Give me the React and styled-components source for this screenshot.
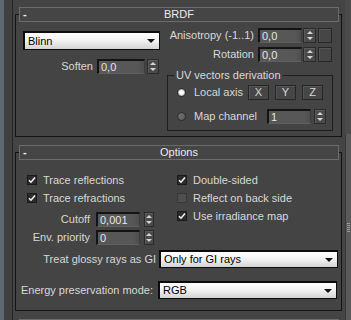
import React from "react";
import styled, { createGlobalStyle } from "styled-components";

const Global = createGlobalStyle`
  html, body { margin: 0; padding: 0; background: #444444; }
  body { font-family: "Liberation Sans", Arial, sans-serif; font-size: 11px; color: #d8d8d8; }
  * { box-sizing: border-box; }
`;

const Screen = styled.div`
  display: flex;
  width: 351px;
  height: 320px;
  overflow: hidden;
  background: #444444;
`;

const EdgeStrip = styled.div`
  flex: none;
  width: 4px;
  background: #5d6873;
`;

const Gutter = styled.div`
  flex: none;
  width: 9px;
  background: #404040;
  border-right: 1px solid #252525;
`;

const Main = styled.div`
  flex: 1;
  min-width: 0;
  display: flex;
  flex-direction: column;
  gap: 8px;
  padding: 7px 3px 0 2px;
`;

const ScrollTrack = styled.div`
  flex: none;
  width: 6px;
  display: flex;
  flex-direction: column;
  padding-top: 134px;
  background: #4b4b4b;
`;

const ScrollThumb = styled.div`
  flex: 1;
  display: flex;
  align-items: center;
  justify-content: center;
  background: #5a5a5a;
  border-left: 1px solid #383838;
`;

const Grip = styled.div`
  width: 3px;
  height: 9px;
  background: repeating-linear-gradient(#9a9a9a 0 1px, transparent 1px 2px);
`;

const Rollout = styled.section`
  display: flex;
  flex-direction: column;
  flex: none;
`;

const RolloutHeader = styled.div`
  position: relative;
  z-index: 1;
  height: 15px;
  margin: 0 3px 0 4px;
  padding: 0 3px;
  display: grid;
  grid-template-columns: 1fr auto 1fr;
  align-items: center;
  border: 1px solid #6c6c6c;
  background: #454545;
  color: #ececec;
  line-height: 13px;
`;

const Collapse = styled.span`
  color: #f0f0f0;
  font-weight: bold;
`;

const HeaderTitle = styled.span`
  text-align: center;
`;

const RolloutBody = styled.div`
  margin-top: -8px;
  border: 1px solid #141414;
  padding: 7px 0 ${(p) => p.$pb}px;
`;

const BrdfLayout = styled.div`
  display: flex;
`;

const LeftCol = styled.div`
  flex: none;
  width: 150px;
  padding-left: 7px;
  display: flex;
  flex-direction: column;
`;

const RightCol = styled.div`
  flex: 1;
  padding-right: 9px;
  display: flex;
  flex-direction: column;
`;

const ParamRow = styled.div`
  display: flex;
  align-items: center;
  justify-content: ${(p) => p.$justify || "flex-end"};
  height: 15px;
  margin-top: ${(p) => p.$mt || 0}px;
  ${(p) => (p.$w ? `width: ${p.$w}px;` : "")}
`;

const Label = styled.span`
  white-space: nowrap;
  color: #d8d8d8;
  line-height: 13px;
  ${(p) => (p.$width ? `flex: none; width: ${p.$width}px;` : "")}
  text-align: ${(p) => p.$align || "left"};
`;

const Edit = styled.div`
  flex: none;
  width: ${(p) => p.$w}px;
  height: 15px;
  margin-left: ${(p) => (p.$ml == null ? 4 : p.$ml)}px;
  padding-left: 2px;
  background: linear-gradient(90deg, #575757 85%, #4e4e4e);
  border-style: solid;
  border-width: 2px 1px 1px 2px;
  border-color: #141414 #3c3c3c #5f5f5f #141414;
  color: #e6e6e6;
  line-height: 12px;
  white-space: nowrap;
`;

const Spin = styled.div`
  flex: none;
  width: ${(p) => p.$w || 12}px;
  height: 15px;
  margin-left: ${(p) => (p.$gap == null ? 2 : p.$gap)}px;
  display: flex;
  flex-direction: column;
  align-items: center;
  justify-content: center;
  gap: 3px;
  background: #4a4a4a;
  border: 1px solid #2b2b2b;
  box-shadow: inset 1px 1px 0 #5a5a5a;
`;

const Arrow = styled.span`
  width: 0;
  height: 0;
  border-left: 3px solid transparent;
  border-right: 3px solid transparent;
  ${(p) => (p.$down ? "border-top: 3px solid #d4d4d4;" : "border-bottom: 3px solid #d4d4d4;")}
`;

const MapButton = styled.div`
  flex: none;
  width: 14px;
  height: 15px;
  margin-left: 2px;
  background: #464646;
  border: 1px solid #272727;
  box-shadow: inset 1px 1px 0 #545454;
`;

const Dropdown = styled.div`
  flex: none;
  width: ${(p) => p.$w}px;
  height: ${(p) => p.$h || 18}px;
  margin-top: ${(p) => p.$mt || 0}px;
  display: flex;
  align-items: center;
  justify-content: space-between;
  padding: 0 4px 0 3px;
  border-style: solid;
  border-color: #0c0c0c;
  border-width: 2px 1px 1px 2px;
  background: linear-gradient(#ffffff, #f3f3f3 45%, #d3d3d3);
  color: #000000;
  line-height: 13px;
  white-space: nowrap;
`;

const DropArrow = styled.span`
  width: 0;
  height: 0;
  border-left: 4px solid transparent;
  border-right: 4px solid transparent;
  border-top: 4px solid #111111;
`;

const Group = styled.fieldset`
  margin: 7px -1px 0 1px;
  padding: 0;
  min-width: 0;
  border: 1px solid #1e1e1e;
`;

const GroupTitle = styled.legend`
  margin-left: 6px;
  padding: 0 2px;
  line-height: 13px;
  color: #d8d8d8;
`;

const GroupInner = styled.div`
  padding: 2px 0 6px 9px;
  display: flex;
  flex-direction: column;
  gap: 8px;
`;

const RadioRow = styled.div`
  display: flex;
  align-items: center;
  height: 16px;
`;

const RadioDot = styled.span`
  flex: none;
  width: 9px;
  height: 9px;
  margin-right: 8px;
  border-radius: 50%;
  border: 1px solid ${(p) => (p.$on ? "#2a2a2a" : "#2e2e2e")};
  background: ${(p) =>
    p.$on
      ? "radial-gradient(circle, #ffffff 0 2px, #c4c4c4 2.6px 100%)"
      : "radial-gradient(circle at 40% 40%, #6e6e6e, #595959)"};
`;

const AxisButton = styled.div`
  flex: none;
  width: 21px;
  height: 15px;
  margin-left: ${(p) => p.$ml || 0}px;
  display: flex;
  align-items: center;
  justify-content: center;
  background: #464646;
  border: 1px solid #262626;
  box-shadow: inset 1px 1px 0 #555555;
  color: #d8d8d8;
`;

const OptionsGrid = styled.div`
  display: grid;
  grid-template-columns: 150px 1fr;
  padding: 11px 0 0 11px;
`;

const Column = styled.div`
  display: flex;
  flex-direction: column;
`;

const CheckRow = styled.div`
  display: flex;
  align-items: center;
  height: 18px;
`;

const Box = styled.span`
  flex: none;
  width: 10px;
  height: 10px;
  margin-right: 6px;
  display: flex;
  align-items: center;
  justify-content: center;
  background: ${(p) => (p.$on ? "#2c2c2c" : "#4e4e4e")};
  border: 1px solid ${(p) => (p.$on ? "#1a1a1a" : "#383838")};
`;

const SelectRow = styled.div`
  display: flex;
  align-items: center;
  justify-content: flex-end;
  margin-top: ${(p) => p.$mt || 0}px;
  padding-right: ${(p) => p.$pr || 3}px;
  gap: ${(p) => p.$gap || 3}px;
`;

function Spinner({ w, gap }) {
  return (
    <Spin $w={w} $gap={gap}>
      <Arrow />
      <Arrow $down />
    </Spin>
  );
}

function Check({ on, children }) {
  return (
    <CheckRow>
      <Box $on={on}>
        {on && (
          <svg width="8" height="8" viewBox="0 0 8 8">
            <path d="M1 4.2 L3 6.2 L7 1.6" fill="none" stroke="#f2f2f2" strokeWidth="1.6" />
          </svg>
        )}
      </Box>
      <Label>{children}</Label>
    </CheckRow>
  );
}

function Header({ title }) {
  return (
    <RolloutHeader>
      <Collapse>-</Collapse>
      <HeaderTitle>{title}</HeaderTitle>
      <span />
    </RolloutHeader>
  );
}

export default function App() {
  return (
    <>
      <Global />
      <Screen>
        <EdgeStrip />
        <Gutter />
        <Main>
          <Rollout>
            <Header title="BRDF" />
            <RolloutBody $pb={5}>
              <BrdfLayout>
                <LeftCol>
                  <Dropdown $w={137} $h={19} $mt={9}>
                    <span>Blinn</span>
                    <DropArrow />
                  </Dropdown>
                  <ParamRow $mt={9} $w={136}>
                    <Label>Soften</Label>
                    <Edit $w={48}>0,0</Edit>
                    <Spinner />
                  </ParamRow>
                </LeftCol>
                <RightCol>
                  <ParamRow $mt={6}>
                    <Label>Anisotropy (-1..1)</Label>
                    <Edit $w={44}>0,0</Edit>
                    <Spinner w={13} gap={1} />
                    <MapButton />
                  </ParamRow>
                  <ParamRow $mt={4}>
                    <Label>Rotation</Label>
                    <Edit $w={44}>0,0</Edit>
                    <Spinner w={13} gap={1} />
                    <MapButton />
                  </ParamRow>
                  <Group>
                    <GroupTitle>UV vectors derivation</GroupTitle>
                    <GroupInner>
                      <RadioRow>
                        <RadioDot $on />
                        <Label $width={54}>Local axis</Label>
                        <AxisButton>X</AxisButton>
                        <AxisButton $ml={6}>Y</AxisButton>
                        <AxisButton $ml={6}>Z</AxisButton>
                      </RadioRow>
                      <RadioRow>
                        <RadioDot />
                        <Label $width={73}>Map channel</Label>
                        <Edit $w={44} $ml={0}>1</Edit>
                        <Spinner gap={3} />
                      </RadioRow>
                    </GroupInner>
                  </Group>
                </RightCol>
              </BrdfLayout>
            </RolloutBody>
          </Rollout>

          <Rollout>
            <Header title="Options" />
            <RolloutBody $pb={11}>
              <OptionsGrid>
                <Column>
                  <Check on>Trace reflections</Check>
                  <Check on>Trace refractions</Check>
                  <ParamRow $mt={5} $justify="flex-start">
                    <Label $width={63} $align="right">Cutoff</Label>
                    <Edit $w={44} $ml={6}>0,001</Edit>
                    <Spinner w={10} gap={4} />
                  </ParamRow>
                  <ParamRow $mt={3} $justify="flex-start">
                    <Label $width={63} $align="right">Env. priority</Label>
                    <Edit $w={44} $ml={6}>0</Edit>
                    <Spinner w={10} gap={4} />
                  </ParamRow>
                </Column>
                <Column>
                  <Check on>Double-sided</Check>
                  <Check>Reflect on back side</Check>
                  <Check on>Use irradiance map</Check>
                </Column>
              </OptionsGrid>
              <SelectRow $mt={5}>
                <Label>Treat glossy rays as GI</Label>
                <Dropdown $w={179} $h={18}>
                  <span>Only for GI rays</span>
                  <DropArrow />
                </Dropdown>
              </SelectRow>
              <SelectRow $mt={13} $pr={4} $gap={5}>
                <Label>Energy preservation mode:</Label>
                <Dropdown $w={179} $h={18}>
                  <span>RGB</span>
                  <DropArrow />
                </Dropdown>
              </SelectRow>
            </RolloutBody>
          </Rollout>

          <Rollout>
            <RolloutHeader />
          </Rollout>
        </Main>
        <ScrollTrack>
          <ScrollThumb>
            <Grip />
          </ScrollThumb>
        </ScrollTrack>
      </Screen>
    </>
  );
}
